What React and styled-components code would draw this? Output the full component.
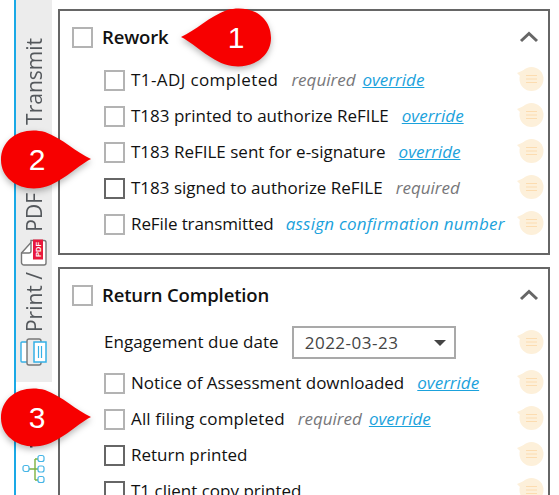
import React from "react";
import styled, { createGlobalStyle } from "styled-components";

const Global = createGlobalStyle`
  html, body { margin: 0; padding: 0; background: #fff; overflow: hidden; }
  #root { width: 559px; height: 495px; overflow: hidden; }
`;
const Page = styled.div`
  position: relative; display: flex; width: 559px; height: 495px; overflow: hidden;
  font-family: "Open Sans", "Noto Sans", sans-serif; color: #111; background: #fff;
`;
const Rail = styled.aside`
  margin-left: 14px; flex: none; border-left: 2px solid #1aa9e6; width: 36px;
  display: flex; flex-direction: column;
`;
const RailTab = styled.div`
  height: 382px; background: #ececec; display: flex; flex-direction: column; align-items: center;
  padding-top: 38px; box-sizing: border-box; overflow: hidden;
`;
const RailText = styled.span`
  writing-mode: vertical-rl; transform: rotate(180deg); font-size: 21px; line-height: 26px; color: #54585c;
  white-space: nowrap; margin-top: ${p => p.$top || 0}px;
`;
const RailIcon = styled.svg`
  flex: none; display: block; margin-top: ${p => p.$top || 0}px;
`;
const RailLow = styled.div`
  flex: 1; display: flex; flex-direction: column; align-items: center; padding-top: 62px;
`;
const Main = styled.main`
  flex: 1; padding: 9px 9px 0 6px; display: flex; flex-direction: column; gap: 12px; min-width: 0;
`;
const Panel = styled.section`
  flex: none; border: 2px solid #666; box-sizing: border-box; padding: 15px 6px 0 12px;
  height: ${p => p.$h}px;
`;
const PanelHead = styled.header`
  display: flex; align-items: center; height: 22px; margin-bottom: 14px;
`;
const Title = styled.h2`
  flex: 1; margin: 0 0 0 9px; font-size: 18.5px; font-weight: 600; color: #111; letter-spacing: -0.15px; line-height: 22px;
`;
const Box = styled.span`
  flex: none; display: block; width: 21px; height: 21px; box-sizing: border-box;
  border: 2px solid ${p => p.$dark ? "#666" : "#b3b3b3"}; background: #fff;
`;
const Chevron = styled.svg`
  flex: none; display: block; margin-right: 3px;
`;
const Rows = styled.div`
  padding-left: 32px; display: flex; flex-direction: column;
`;
const Row = styled.div`
  display: flex; align-items: center; height: ${p => p.$h || 36}px; font-size: 17px; white-space: nowrap;
`;
const Label = styled.span`
  margin: 0 0 2px ${p => p.$flush ? 0 : 6}px;
  letter-spacing: ${p => p.$track || 0}px;
`;
const Req = styled.em`
  margin: 0 0 2px 13px; color: #77777a;
`;
const Link = styled.a`
  margin: 0 0 2px ${p => p.$gap}px; color: #1ba2dc; font-style: italic;
  text-decoration: ${p => p.$plain ? "none" : "underline"};
  letter-spacing: ${p => p.$plain ? 0.25 : 0}px;
`;
const Note = styled.svg`
  flex: none; display: block; margin-left: auto; margin-right: -2px; margin-top: -2px;
`;
const DateSelect = styled.div`
  margin-left: 13px; width: 164px; height: 33px; box-sizing: border-box; border: 2px solid #a9a9a9;
  display: flex; align-items: center; justify-content: space-between; padding: 0 8px 0 11px; color: #444; letter-spacing: 0.5px;
`;
const Caret = styled.span`
  width: 0; height: 0; border-left: 6px solid transparent; border-right: 6px solid transparent; border-top: 6px solid #444;
`;
const BadgeWrap = styled.div`
  position: absolute; left: ${p => p.$x}px; top: ${p => p.$y}px; width: 94px; height: 64px;
`;
const BadgeShape = styled.svg`
  display: block; filter: drop-shadow(0 3px 3px rgba(0,0,0,.28));
`;
const BadgeNum = styled.span`
  position: absolute; left: ${p => p.$flip ? 41 : 22}px; top: 0; width: 30px; line-height: 62px; text-align: center;
  font-family: "Liberation Sans", sans-serif; font-size: 30px; color: #fff;
`;

const NoteIcon = () => (
  <Note width="28" height="26" viewBox="0 0 28 26">
    <path d="M1 7 L8 4 L8 14 Z" fill="#fdf0da" />
    <circle cx="15.5" cy="13" r="12" fill="#fdf0da" />
    <path d="M10 9.5h11M10 13h11M10 16.5h11" stroke="#fcdcb0" strokeWidth="1" />
  </Note>
);
const Up = () => (
  <Chevron width="20" height="12" viewBox="0 0 20 12">
    <path d="M2 10 L10 2.5 L18 10" fill="none" stroke="#666" strokeWidth="3" />
  </Chevron>
);
const Badge = ({ x, y, n, flip }) => (
  <BadgeWrap $x={x} $y={y}>
    <BadgeShape width="94" height="64" viewBox="0 0 94 64">
      <path
        d="M91 30 C77 24 62 9 45 3 C22 -3 1 9 1 31 C1 50 20 62 40 59 C60 56 75 38 91 30 Z"
        fill="#f70000"
        transform={flip ? "matrix(-1 0 0 1 92 0)" : undefined}
      />
    </BadgeShape>
    <BadgeNum $flip={flip}>{n}</BadgeNum>
  </BadgeWrap>
);

export default function App() {
  return (
    <Page>
      <Global />
      <Rail>
        <RailTab>
          <RailText>Transmit</RailText>
          <RailIcon $top={6} width="18" height="20" viewBox="0 0 18 20">
            <circle cx="9" cy="10" r="8.5" fill="none" stroke="#6ab04c" strokeWidth="1.5" />
          </RailIcon>
          <RailText $top={42}>PDF</RailText>
          <RailIcon $top={7} width="28" height="28" viewBox="0 0 28 28">
            <path d="M1.5 14 L11 3.5 V1.5 H24 a2 2 0 0 1 2 2 V24 a2 2 0 0 1-2 2 H4 a2.5 2.5 0 0 1-2.5-2.5 Z" fill="#fff" stroke="#777" strokeWidth="1.4" />
            <path d="M1.5 14 H9 a2 2 0 0 0 2-2 V3.5" fill="none" stroke="#777" strokeWidth="1.4" />
            <rect x="13" y="0.5" width="10" height="20" fill="#e8193c" />
            <text x="0" y="0" transform="translate(20.5 18) rotate(-90)" fontFamily="Liberation Sans, sans-serif" fontWeight="700" fontSize="7.5" fill="#fff">PDF</text>
          </RailIcon>
          <RailText $top={5}>Print /</RailText>
          <RailIcon $top={6} width="28" height="28" viewBox="0 0 28 28">
            <rect x="1" y="4" width="7" height="20" rx="1" fill="#fff" stroke="#35b0e6" strokeWidth="1.4" />
            <rect x="7" y="1" width="14" height="26" rx="2" fill="#ececec" stroke="#777" strokeWidth="1.4" />
            <rect x="14" y="4" width="12" height="20" fill="#fff" stroke="#35b0e6" strokeWidth="1.5" />
            <path d="M18.5 8v12M21.5 8v12" stroke="#35b0e6" strokeWidth="1.2" />
          </RailIcon>
        </RailTab>
        <RailLow>
          <RailIcon width="24" height="40" viewBox="0 0 24 40">
            <path d="M8 0h2.5v3.5H8z" fill="#33394a" />
            <path d="M6 25H20M13 15V36M13 15H17M13 36H17" fill="none" stroke="#7cb342" strokeWidth="1.4" />
            <rect x="1" y="21.5" width="6" height="6" rx="2" fill="#fff" stroke="#45b5e6" strokeWidth="1.2" />
            <rect x="16" y="11.5" width="6" height="6" rx="2" fill="#fff" stroke="#45b5e6" strokeWidth="1.2" />
            <rect x="16" y="22" width="6" height="6" rx="2" fill="#fff" stroke="#45b5e6" strokeWidth="1.2" />
            <rect x="16" y="32.5" width="6" height="6" rx="2" fill="#fff" stroke="#45b5e6" strokeWidth="1.2" />
          </RailIcon>
        </RailLow>
      </Rail>
      <Main>
        <Panel $h={246}>
          <PanelHead><Box /><Title>Rework</Title><Up /></PanelHead>
          <Rows>
            <Row><Box /><Label $track={0.4}>T1-ADJ completed</Label><Req>required</Req><Link href="#" $gap={7}>override</Link><NoteIcon /></Row>
            <Row><Box /><Label>T183 printed to authorize ReFILE</Label><Link href="#" $gap={13}>override</Link><NoteIcon /></Row>
            <Row><Box /><Label>T183 ReFILE sent for e-signature</Label><Link href="#" $gap={13}>override</Link><NoteIcon /></Row>
            <Row><Box $dark /><Label>T183 signed to authorize ReFILE</Label><Req>required</Req><NoteIcon /></Row>
            <Row><Box /><Label $track={-0.1}>ReFile transmitted</Label><Link href="#" $gap={12} $plain>assign confirmation number</Link><NoteIcon /></Row>
          </Rows>
        </Panel>
        <Panel $h={300}>
          <PanelHead><Box /><Title>Return Completion</Title><Up /></PanelHead>
          <Rows>
            <Row $h={45}><Label $flush $track={0.05}>Engagement due date</Label><DateSelect>2022-03-23<Caret /></DateSelect><NoteIcon /></Row>
            <Row><Box /><Label>Notice of Assessment downloaded</Label><Link href="#" $gap={13}>override</Link><NoteIcon /></Row>
            <Row><Box /><Label $track={0.15}>All filing completed</Label><Req>required</Req><Link href="#" $gap={7}>override</Link><NoteIcon /></Row>
            <Row><Box $dark /><Label>Return printed</Label><NoteIcon /></Row>
            <Row><Box $dark /><Label>T1 client copy printed</Label><NoteIcon /></Row>
          </Rows>
        </Panel>
      </Main>
      <Badge x={180} y={7} n="1" flip />
      <Badge x={0} y={129} n="2" />
      <Badge x={0} y={387} n="3" />
    </Page>
  );
}
